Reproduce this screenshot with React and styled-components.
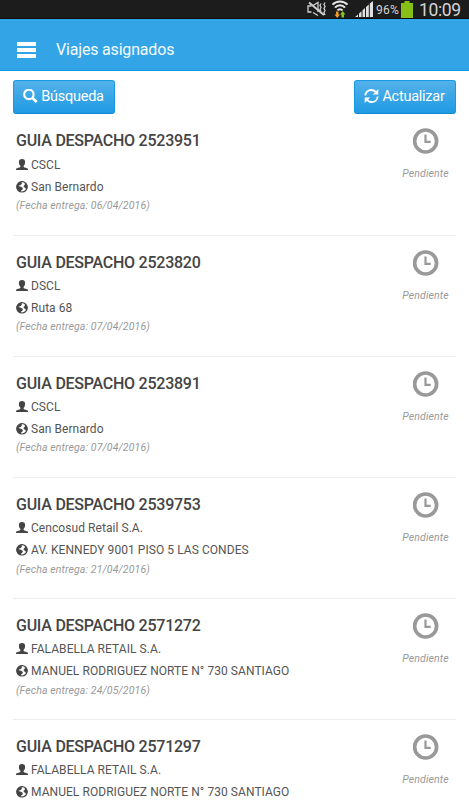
import React from "react";
import styled, { createGlobalStyle } from "styled-components";

const GlobalStyle = createGlobalStyle`
  * {
    box-sizing: border-box;
  }
  body {
    margin: 0;
    background: #fff;
    font-family: Roboto, "Liberation Sans", sans-serif;
    color: #444;
  }
`;

const Screen = styled.div`
  width: 469px;
  height: 800px;
  overflow: hidden;
`;

const StatusBar = styled.div`
  height: 19px;
  display: flex;
  align-items: center;
  justify-content: flex-end;
  padding-right: 8px;
  background: #1c1c1c;
  border-bottom: 1px solid #0b0b0b;
  color: #d4d4d4;
  white-space: nowrap;

  svg {
    flex: none;
  }
`;

const Percent = styled.span`
  width: 24px;
  margin: 1px 1px 0 3px;
  font-size: 12px;
  letter-spacing: 0.3px;
`;

const Clock = styled.span`
  width: 42px;
  margin: 2px 0 0 6px;
  font-size: 17.5px;
  line-height: 18px;
  letter-spacing: -0.35px;
`;

const Header = styled.header`
  height: 52px;
  display: flex;
  align-items: center;
  padding: 10px 17px 0;
  background: #33a5e7;
  border-bottom: 1px solid #0e98e3;
`;

const Menu = styled.div`
  width: 19px;
  height: 16px;
  display: flex;
  flex-direction: column;
  justify-content: space-between;
`;

const MenuBar = styled.span`
  height: 4px;
  background: #fff;
`;

const HeaderTitle = styled.h1`
  margin: 1px 0 0 20px;
  font-size: 16px;
  font-weight: 400;
  line-height: 20px;
  letter-spacing: -0.18px;
  color: #f4faff;
`;

const Toolbar = styled.div`
  display: flex;
  justify-content: space-between;
  padding: 9px 13px 0;
`;

const Button = styled.button`
  width: 102px;
  height: 34px;
  display: flex;
  align-items: center;
  justify-content: center;
  gap: 3px;
  padding: 0 1px 1px 0;
  border: 1px solid #169ae3;
  border-bottom-color: #0d8cd3;
  border-radius: 3px;
  background: linear-gradient(#54b1ea, #1f9ae3);
  color: #fff;
  font-family: inherit;
  font-size: 14.5px;
  letter-spacing: -0.25px;
`;

const List = styled.ul`
  margin: 0.4px 13px 0;
  padding: 0;
  list-style: none;
`;

const Row = styled.li`
  height: 121.15px;
  display: flex;
  justify-content: space-between;
  padding: 18px 3px 0;
  border-bottom: 1px solid #eee;
`;

const RowTitle = styled.h2`
  margin: 0 0 3.4px;
  font-size: 16px;
  font-weight: 500;
  line-height: 18px;
  letter-spacing: -0.25px;
`;

const Info = styled.div`
  height: 22px;
  display: flex;
  align-items: center;
  gap: 3px;
  font-size: 12px;
  letter-spacing: 0.06px;
  color: #555;
  white-space: nowrap;
`;

const Delivery = styled.div`
  margin-top: 0.4px;
  font-size: 10.5px;
  font-style: italic;
  line-height: 16px;
  letter-spacing: 0.12px;
  color: #999;
`;

const Status = styled.div`
  width: 53px;
  display: flex;
  flex-direction: column;
  align-items: center;
  margin: -4px 1px 0 0;
  font-size: 10.5px;
  font-style: italic;
  line-height: 14px;
  letter-spacing: 0.12px;
  color: #999;
`;

const StatusLabel = styled.span`
  margin-top: 13px;
`;

const MutedIcon = () => (
  <svg width="20" height="16" viewBox="0 0 20 16" fill="none" stroke="#cfcfcf">
    <path d="M4.500 11H1V5h3.500M6 4.500l5-3V11M6 11.500l5 3" strokeWidth="1.300" />
    <path d="M2 1.500l15 12.500" strokeWidth="2" />
    <path d="M14 2.500l-1 2 1 2-1 2 1 2M18 1.500l-1 2 1 2-1 2 1 2-1 2 1 2.500" strokeWidth="1.300" />
  </svg>
);

const WifiIcon = styled(({ className }) => (
  <svg className={className} width="18" height="18" viewBox="0 0 18 18" fill="none">
    <path
      d="M1.500 4.700C5.500 .3 12.500 .3 16.500 4.700M4 7.700c2.800-3.300 7.200-3.300 10 0M6.400 10.400c1.500-1.700 3.700-1.700 5.200 0"
      stroke="#e6e6e6"
      strokeWidth="2"
    />
    <path d="M5 11.500h2.500v3H9l-2.800 3.500L3.500 14.500H5z" fill="#f0962b" />
    <path d="M10.500 17.500H13v-3h1.500L11.700 11 9 14.500h1.500z" fill="#84c225" />
  </svg>
))`
  margin: 0 6px 0 4px;
`;

const SignalIcon = () => (
  <svg width="18" height="16" viewBox="0 0 18 16" fill="#e0e0e0">
    <path d="M0 16l3-2.500V16zM4 16v-3.500l2.500-2.300V16zM7.500 16V9.300L10 7v9zM11 16V6l2.800-2.500V16zM14.800 16V2.500L18 0v16z" />
  </svg>
);

const BatteryIcon = () => (
  <svg width="12" height="17" viewBox="0 0 12 17" fill="#86c017">
    <path d="M3.500 0h5v2H12v15H0V2h3.500z" />
  </svg>
);

const SearchIcon = () => (
  <svg width="15" height="15" viewBox="0 0 15 15" fill="none" stroke="#fff">
    <circle cx="5.900" cy="5.400" r="4.700" strokeWidth="2.100" />
    <path d="M9.200 8.700l4.500 4.400" strokeWidth="2.800" />
  </svg>
);

const RefreshIcon = () => (
  <svg width="15" height="15" viewBox="0 0 15 15" fill="none">
    <path
      d="M1.300 6.500C1.600 3.100 4.300 1 7.300 1c1.800 0 3.200.6 4.400 1.900M13.700 7.500c-.3 3.400-3 5.500-6 5.500-1.800 0-3.200-.6-4.400-1.900"
      stroke="#fff"
      strokeWidth="1.800"
    />
    <path d="M14.300 0v5.500H8.800zM.7 14V8.500h5.500z" fill="#fff" />
  </svg>
);

const UserIcon = () => (
  <svg width="12" height="12" viewBox="0 0 12 12" fill="#444">
    <path d="M6 0C3.900 0 2.800 1.200 2.900 3.200 3 5 3.600 6 4.400 6.800v1.100C3.600 8.600.9 8.800.3 9.600 0 10 0 10.500 0 11h12c0-.5 0-1-.3-1.400-.6-.8-3.300-1-4.100-1.700V6.800C8.400 6 9 5 9.100 3.200 9.200 1.200 8.100 0 6 0z" />
  </svg>
);

const GlobeIcon = () => (
  <svg width="12" height="12" viewBox="0 0 12 12">
    <circle cx="6" cy="5.800" r="5.200" fill="#fff" stroke="#444" strokeWidth="1.200" />
    <path
      d="M6.500.5L5.300 1.800l.7 1-1.700 1.400-1.500.2.100.9 2.200.4 1.800 1.300-.4 1.500-1.600 1.200-.1 1.400C2.100 10.500.5 8.500.5 5.800S3 .4 6.500.5z"
      fill="#444"
    />
    <path d="M8.800 1.500l1.600 1L11.500 5l-.3 2.500-1.200.8-.7-1.600-1.400-.4-.4-1.400 1.300-1.200z" fill="#444" />
  </svg>
);

const TimeIcon = () => (
  <svg width="26" height="26" viewBox="0 0 26 26" fill="none" stroke="#999">
    <circle cx="12.600" cy="13" r="11" strokeWidth="3.700" />
    <path d="M12.500 6.500v7.300h5.200" strokeWidth="2.200" />
  </svg>
);

const trips = [
  { id: 2523951, client: "CSCL", place: "San Bernardo", date: "06/04/2016" },
  { id: 2523820, client: "DSCL", place: "Ruta 68", date: "07/04/2016" },
  { id: 2523891, client: "CSCL", place: "San Bernardo", date: "07/04/2016" },
  {
    id: 2539753,
    client: "Cencosud Retail S.A.",
    place: "AV. KENNEDY 9001 PISO 5 LAS CONDES",
    date: "21/04/2016"
  },
  {
    id: 2571272,
    client: "FALABELLA RETAIL S.A.",
    place: "MANUEL RODRIGUEZ NORTE N° 730 SANTIAGO",
    date: "24/05/2016"
  },
  {
    id: 2571297,
    client: "FALABELLA RETAIL S.A.",
    place: "MANUEL RODRIGUEZ NORTE N° 730 SANTIAGO"
  }
];

const Trip = ({ id, client, place, date }) => (
  <Row>
    <div>
      <RowTitle>GUIA DESPACHO {id}</RowTitle>
      <Info>
        <UserIcon />
        {client}
      </Info>
      <Info>
        <GlobeIcon />
        {place}
      </Info>
      {date && <Delivery>(Fecha entrega: {date})</Delivery>}
    </div>
    <Status>
      <TimeIcon />
      <StatusLabel>Pendiente</StatusLabel>
    </Status>
  </Row>
);

const App = () => (
  <Screen>
    <GlobalStyle />
    <StatusBar>
      <MutedIcon />
      <WifiIcon />
      <SignalIcon />
      <Percent>96%</Percent>
      <BatteryIcon />
      <Clock>10:09</Clock>
    </StatusBar>
    <Header>
      <Menu>
        <MenuBar />
        <MenuBar />
        <MenuBar />
      </Menu>
      <HeaderTitle>Viajes asignados</HeaderTitle>
    </Header>
    <Toolbar>
      <Button>
        <SearchIcon />
        Búsqueda
      </Button>
      <Button>
        <RefreshIcon />
        Actualizar
      </Button>
    </Toolbar>
    <List>
      {trips.map(trip => (
        <Trip key={trip.id} {...trip} />
      ))}
    </List>
  </Screen>
);

export default App;
